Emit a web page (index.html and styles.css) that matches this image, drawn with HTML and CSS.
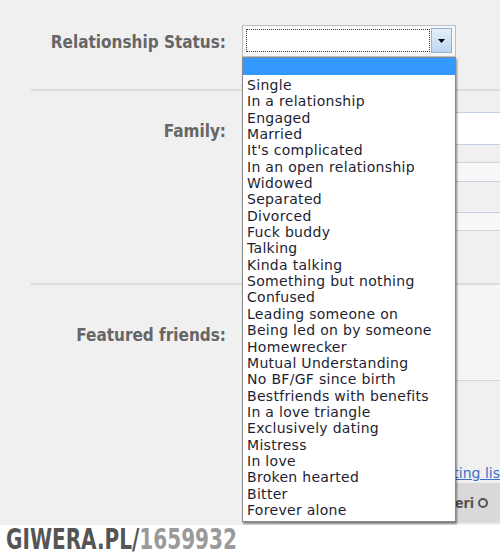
FILE: index.html
```html
<!DOCTYPE html>
<html>
<head>
<meta charset="utf-8">
<title>Relationship Status</title>
<link rel="stylesheet" href="styles.css">
</head>
<body>
<div class="screen">
  <div class="row row-status">
    <div class="label">Relationship Status:</div>
    <div class="field">
      <div class="select">
        <div class="select-inner">
          <div class="select-value"></div>
          <div class="select-btn">
            <svg width="7" height="4" viewBox="0 0 7 4"><path d="M0 0H7L3.5 4Z" fill="#000"/></svg>
          </div>
        </div>
        <div class="dropdown">
          <div class="opt opt-selected">&nbsp;</div>
          <div class="opt">Single</div>
          <div class="opt">In a relationship</div>
          <div class="opt">Engaged</div>
          <div class="opt">Married</div>
          <div class="opt">It's complicated</div>
          <div class="opt">In an open relationship</div>
          <div class="opt">Widowed</div>
          <div class="opt">Separated</div>
          <div class="opt">Divorced</div>
          <div class="opt">Fuck buddy</div>
          <div class="opt">Talking</div>
          <div class="opt">Kinda talking</div>
          <div class="opt">Something but nothing</div>
          <div class="opt">Confused</div>
          <div class="opt">Leading someone on</div>
          <div class="opt">Being led on by someone</div>
          <div class="opt">Homewrecker</div>
          <div class="opt">Mutual Understanding</div>
          <div class="opt">No BF/GF since birth</div>
          <div class="opt">Bestfriends with benefits</div>
          <div class="opt">In a love triangle</div>
          <div class="opt">Exclusively dating</div>
          <div class="opt">Mistress</div>
          <div class="opt">In love</div>
          <div class="opt">Broken hearted</div>
          <div class="opt">Bitter</div>
          <div class="opt">Forever alone</div>
        </div>
      </div>
    </div>
  </div>
  <div class="sep"></div>
  <div class="row row-family">
    <div class="label">Family:</div>
    <div class="field family-fields">
      <div class="fbox fbox-1"></div>
      <div class="fbox fbox-2"></div>
      <div class="fbox fbox-3"></div>
    </div>
  </div>
  <div class="sep"></div>
  <div class="row row-friends">
    <div class="label">Featured friends:</div>
    <div class="field friends-field">
      <div class="friends-box"></div>
      <div class="friends-space"></div>
      <div class="link-line"><a class="link" href="#">Add to existing lis</a></div>
      <div class="bar"><span class="bar-text">Sortowanie kryteri</span><span class="bar-circle"></span></div>
    </div>
  </div>
</div>
<div class="watermark"><span class="wm-text"><span class="wm-dark">GIWERA.PL/</span><span class="wm-light">1659932</span></span></div>
</body>
</html>
```

FILE: styles.css
```css
html, body {
  margin: 0;
  padding: 0;
  background: #ffffff;
}

body {
  width: 500px;
  height: 557px;
  overflow: hidden;
  font-family: "DejaVu Sans Condensed", "DejaVu Sans", sans-serif;
}

.screen {
  height: 525px;
  background: #f0f0f0;
  overflow: hidden;
}

.row {
  display: grid;
  grid-template-columns: 226px 1fr;
  column-gap: 16px;
}

.label {
  text-align: right;
  font-weight: bold;
  font-size: 17px;
  line-height: 20px;
  color: #666666;
  white-space: nowrap;
}

.row-status {
  height: 89px;
}

.row-status .label {
  padding-top: 32px;
}

.row-status .field {
  padding-top: 25px;
}

.select {
  position: relative;
  width: 214px;
  height: 32px;
  box-sizing: border-box;
  border: 1px solid #b9c0c8;
  background: #f7f7f7;
  padding: 2px 3px 3px 2px;
}

.select-inner {
  display: flex;
  height: 25px;
  background: #ffffff;
}

.select-value {
  flex: 1;
  border: 1px dotted #333;
  margin: 1px;
}

.select-btn {
  width: 21px;
  box-sizing: border-box;
  border: 1px solid #94b4d6;
  background: linear-gradient(#e4effa, #bcd6ef);
  display: flex;
  align-items: center;
  justify-content: center;
}

.dropdown {
  position: absolute;
  left: -1px;
  top: 31px;
  width: 214px;
  height: 465px;
  box-sizing: border-box;
  background: #ffffff;
  border: 1px solid #8a8a8a;
  box-shadow: 1px 2px 2px rgba(0, 0, 0, 0.45);
  font-family: "DejaVu Sans", sans-serif;
  font-size: 14px;
  line-height: 16.35px;
  letter-spacing: 0.3px;
  color: #1e1e32;
  overflow: hidden;
}

.opt {
  padding-left: 4px;
  white-space: nowrap;
}

.opt-selected {
  background: #3399ff;
  height: 17px;
  margin-bottom: 2px;
}

.sep {
  height: 2px;
  margin-left: 31px;
  background: #dcdcdc;
}

.row-family {
  height: 192px;
}

.row-family .label {
  padding-top: 30px;
}

.family-fields {
  display: flex;
  flex-direction: column;
}

.fbox {
  box-sizing: border-box;
}

.fbox-1 {
  margin-top: 21px;
  height: 33px;
  background: #ffffff;
  border-top: 1px solid #c5d0e2;
  border-bottom: 1px solid #c5d0e2;
}

.fbox-2 {
  margin-top: 17px;
  height: 20px;
  background: #f7f7f7;
  border-top: 1px solid #d4d4d4;
  border-bottom: 1px solid #c5d0e2;
}

.fbox-3 {
  margin-top: 30px;
  height: 19px;
  background: #f7f7f7;
  border-top: 1px solid #c5d0e2;
  border-bottom: 1px solid #d4d4d4;
}

.row-friends {
  height: 239px;
}

.row-friends .label {
  padding-top: 40px;
}

.friends-field {
  display: flex;
  flex-direction: column;
  min-width: 0;
}

.friends-box {
  height: 95px;
  border-bottom: 1px solid #d4d4d4;
  background: #f5f5f5;
}

.friends-space {
  flex: 1;
}

.link-line {
  text-align: right;
  height: 18px;
  font-family: "DejaVu Sans", sans-serif;
  font-size: 14px;
  line-height: 16px;
  white-space: nowrap;
}

.link {
  color: #3b6fc7;
  text-decoration: underline;
}

.bar {
  margin-left: 35px;
  height: 40px;
  background: #d9d9d9;
  display: flex;
  align-items: center;
  justify-content: flex-end;
  padding-right: 12px;
  margin-bottom: 1px;
  font-weight: bold;
  font-size: 14px;
  color: #555555;
  white-space: nowrap;
}

.bar-circle {
  display: inline-block;
  width: 6px;
  height: 6px;
  border: 2px solid #555555;
  border-radius: 50%;
  margin-left: 4px;
}

.watermark {
  height: 32px;
  padding-left: 6px;
  font-family: "DejaVu Sans Condensed", "DejaVu Sans", sans-serif;
  font-weight: bold;
  font-size: 28px;
  line-height: 30px;
  white-space: nowrap;
}

.wm-text {
  display: inline-block;
  transform: scaleX(0.795);
  transform-origin: 0 0;
}

.wm-dark {
  color: #555555;
}

.wm-light {
  color: #9a9a9a;
}
```
